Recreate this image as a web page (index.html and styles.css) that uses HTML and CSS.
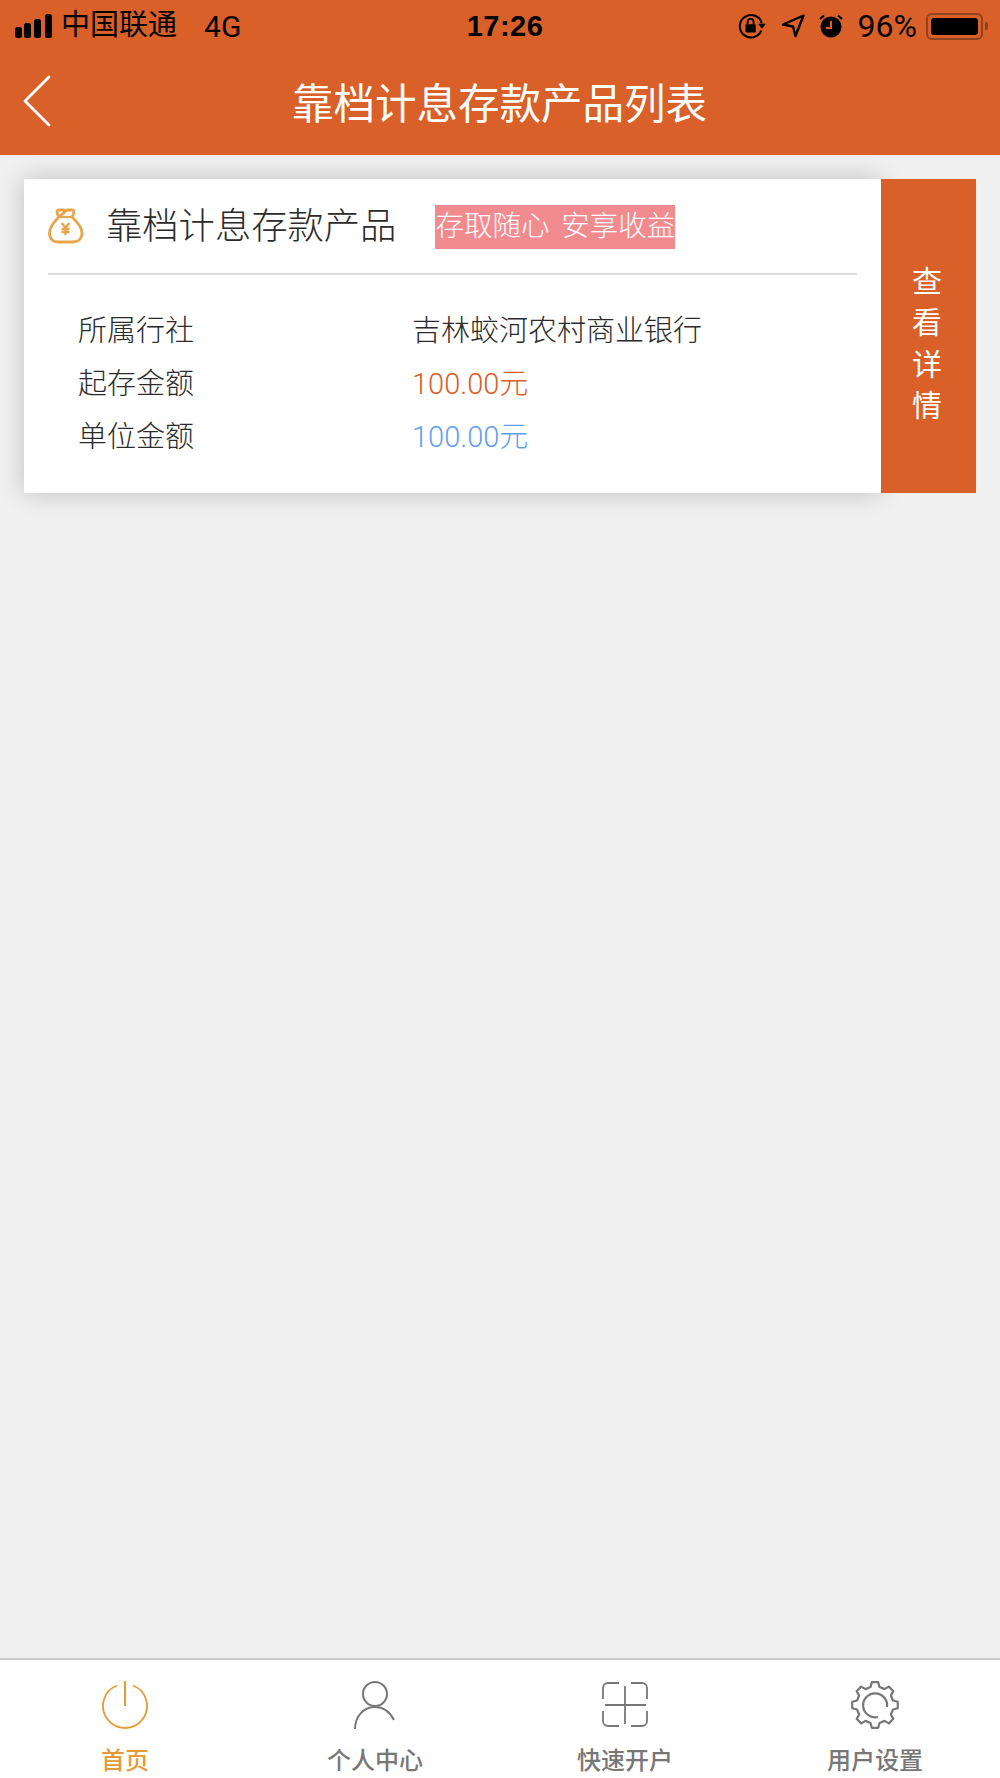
FILE: index.html

```html
<!DOCTYPE html>
<html lang="zh-CN">
<head>
  <meta charset="UTF-8" />
  <meta name="viewport" content="width=device-width, initial-scale=1.0" />
  <title>靠档计息存款产品列表</title>
  <link rel="stylesheet" href="styles.css">
</head>
<body>
  <header class="top">
    <div class="status">
      <div class="status-left">
        <svg class="signal" width="40" height="26" viewBox="0 0 40 26">
          <rect x="1" y="14" width="7" height="11" rx="2.5" />
          <rect x="10" y="10" width="7" height="15" rx="2.5" />
          <rect x="20" y="6" width="7" height="19" rx="2.5" />
          <rect x="31" y="1" width="7" height="24" rx="2.5" />
        </svg>
        <span class="carrier">中国联通</span>
        <span class="network">4G</span>
      </div>
      <div class="time">17:26</div>
      <div class="status-right">
        <svg width="28" height="28" viewBox="0 0 30 28">
          <path d="M25 19 A12 12 0 1 1 25.500 11" fill="none" stroke="#000" stroke-width="2.200" />
          <path d="M21.500 11.500 L30 11.500 L25.700 17 Z" />
          <rect x="8" y="12" width="11" height="9" rx="1" />
          <path d="M10.300 12 V9.500 A3.200 3.200 0 0 1 16.700 9.500 V12" fill="none" stroke="#000" stroke-width="2" />
        </svg>
        <svg class="gap-loc" width="24" height="24" viewBox="0 0 24 24">
          <path d="M22.500 1.500 L2 10.500 L12 12.500 L14.500 22 Z" fill="none" stroke="#000" stroke-width="2.400" stroke-linejoin="round" />
        </svg>
        <svg class="gap-alarm" width="24" height="26" viewBox="0 0 24 26">
          <circle cx="12" cy="14" r="10.500" />
          <path d="M12 8 V15 H7" fill="none" stroke="#d96029" stroke-width="2" />
          <path d="M1 6 L5 2.500 M23 6 L19 2.500" fill="none" stroke="#000" stroke-width="2.200" />
        </svg>
        <span class="battery-num">96%</span>
        <div class="battery"><div class="battery-fill"></div></div>
        <div class="battery-nub"></div>
      </div>
    </div>
    <div class="nav">
      <svg class="back" width="30" height="52" viewBox="0 0 30 52">
        <path d="M27 2 L3 26 L27 50" fill="none" stroke="#fff" stroke-width="2.800" stroke-linecap="round" stroke-linejoin="round" />
      </svg>
      <h1>靠档计息存款产品列表</h1>
    </div>
  </header>

  <main class="content">
    <div class="card">
      <div class="card-body">
        <div class="card-head">
          <svg class="bag" width="36" height="36" viewBox="0 0 36 36">
            <path d="M11 9 C9 6 8 2 11 2 H16 M19 2 H24 C27 2 26 6 24 9 C27 12 34 18 34 25 C34 31 30 34 25 34 H10 C5 34 1.500 31 1.500 25 C1.500 18 8 12 11 9 Z" fill="none" stroke="#e8a64a" stroke-width="2.800" stroke-linejoin="round" stroke-linecap="round" />
            <path d="M11 9 H24" fill="none" stroke="#e8a64a" stroke-width="2.200" />
            <path d="M13.500 15 L17.500 19.500 L21.500 15 M17.500 19.500 V27 M13.500 21 H21.500 M13.500 24 H21.500" fill="none" stroke="#e8a64a" stroke-width="2.400" />
          </svg>
          <span class="card-title">靠档计息存款产品</span>
          <span class="tag">存取随心 安享收益</span>
        </div>
        <div class="rows">
          <div class="row"><span>所属行社</span><span>吉林蛟河农村商业银行</span></div>
          <div class="row"><span>起存金额</span><span class="orange">100.00元</span></div>
          <div class="row"><span>单位金额</span><span class="blue">100.00元</span></div>
        </div>
      </div>
      <div class="card-btn"><span>查</span><span>看</span><span>详</span><span>情</span></div>
    </div>
  </main>

  <footer class="tabs">
    <div class="tab active">
      <svg width="50" height="52" viewBox="0 0 50 52">
        <path d="M17 6.500 A22 22 0 1 0 33 6.500" fill="none" stroke="#e59a38" stroke-width="1.800" />
        <path d="M25 2 V27" fill="none" stroke="#e59a38" stroke-width="2" />
      </svg>
      <span>首页</span>
    </div>
    <div class="tab">
      <svg width="50" height="52" viewBox="0 0 50 52">
        <circle cx="25" cy="15" r="12" fill="none" stroke="#777" stroke-width="2" />
        <path d="M5 50 C5 37 14 28 25 28 C33 28 40 33 44 41" fill="none" stroke="#777" stroke-width="2" />
      </svg>
      <span>个人中心</span>
    </div>
    <div class="tab">
      <svg width="50" height="52" viewBox="0 0 50 52">
        <path d="M19 4 H8 A5 5 0 0 0 3 9 V20 M3 32 V42 A5 5 0 0 0 8 47 H19 M31 4 H42 A5 5 0 0 1 47 9 V20 M47 32 V42 A5 5 0 0 1 42 47 H31" fill="none" stroke="#777" stroke-width="1.800" />
        <path d="M5 26 H46 M25 7 V45" fill="none" stroke="#777" stroke-width="1.800" />
      </svg>
      <span>快速开户</span>
    </div>
    <div class="tab">
      <svg width="50" height="52" viewBox="-25 -26 50 52">
        <path d="M-4.480 -17.950 L-3.200 -22.780 L3.200 -22.780 L4.480 -17.950 L9.530 -15.860 L13.840 -18.370 L18.370 -13.840 L15.860 -9.530 L17.950 -4.480 L22.780 -3.200 L22.780 3.200 L17.950 4.480 L15.860 9.530 L18.370 13.840 L13.840 18.370 L9.530 15.860 L4.480 17.950 L3.200 22.780 L-3.200 22.780 L-4.480 17.950 L-9.530 15.860 L-13.840 18.370 L-18.370 13.840 L-15.860 9.530 L-17.950 4.480 L-22.780 3.200 L-22.780 -3.200 L-17.950 -4.480 L-15.860 -9.530 L-18.370 -13.840 L-13.840 -18.370 L-9.530 -15.860 Z" fill="none" stroke="#777" stroke-width="2.200" stroke-linejoin="round" />
        <path d="M3 12 A12 12 0 1 1 12 2" fill="none" stroke="#777" stroke-width="2.200" />
      </svg>
      <span>用户设置</span>
    </div>
  </footer>
</body>
</html>
```

FILE: styles.css

```css
* { box-sizing: border-box; }
html, body { margin: 0; padding: 0; }
body {
  width: 1000px;
  height: 1778px;
  display: flex;
  flex-direction: column;
  overflow: hidden;
  background: #f0f0f0;
  color: #2b2b2b;
  font-family: Roboto, "Noto Sans CJK SC", sans-serif;
  font-weight: 300;
}

/* status bar + nav */
.top { height: 155px; background: #d96029; flex: none; }
.status { height: 52px; display: grid; grid-template-columns: 1fr auto 1fr; align-items: center; color: #000; }
.status-left { display: flex; align-items: center; padding-left: 14px; font-size: 29px; font-weight: 400; }
.signal { flex: none; margin-right: 7px; }
.carrier { line-height: 46px; margin-bottom: 2px; }
.network { margin-left: 27px; font-size: 30px; }
.time { margin-left: 10px; font-family: "Liberation Sans", sans-serif; font-size: 29px; font-weight: 700; letter-spacing: 0.500px; }
.status-right { display: flex; align-items: center; justify-content: flex-end; padding-right: 12px; }
.gap-loc { margin-left: 15px; }
.gap-alarm { margin-left: 14px; }
.battery-num { margin-left: 15px; font-size: 32px; font-weight: 400; }
.battery { width: 57px; height: 27px; margin-left: 9px; padding: 3px; border: 2px solid #8f431c; border-radius: 6px; }
.battery-fill { height: 100%; background: #000; border-radius: 3px; }
.battery-nub { width: 3px; height: 8px; margin-left: 2px; background: #8f431c; border-radius: 0 2px 2px 0; }

.nav { height: 103px; display: flex; align-items: center; justify-content: center; position: relative; }
.nav h1 { margin: 0 0 6px; padding-right: 1px; color: #fff; font-size: 41.500px; font-weight: 400; }
.back { position: absolute; left: 22px; top: 23px; }

/* card */
.content { flex: 1; padding: 24px 24px 0 24px; }
.card { display: flex; height: 314px; }
.card-body { flex: 1; background: #fff; padding: 0 24px; box-shadow: 0 0 24px rgba(0, 0, 0, 0.2); }
.card-btn {
  width: 95px;
  display: flex;
  flex-direction: column;
  align-items: center;
  justify-content: center;
  padding: 15px 3px 0 0;
  background: #d96029;
  color: #fff;
  font-size: 30px;
  font-weight: 400;
  line-height: 41.500px;
  position: relative;
}
.card-head { height: 96px; display: flex; align-items: center; border-bottom: 2px solid #ddd; padding-bottom: 4px; }
.bag { flex: none; margin-top: 4px; margin-left: 0; }
.card-title { margin-left: 22px; margin-top: -3px; font-size: 36.300px; }
.tag {
  margin-left: 39px;
  height: 44px;
  line-height: 44px;
  margin-top: 5px;
  background: #f28b8f;
  color: #fff;
  font-size: 28.500px;
  word-spacing: 5px;
  white-space: nowrap;
}
.rows { padding: 30px 0 0 30px; }
.row { display: grid; grid-template-columns: 334px 1fr; height: 53px; line-height: 53px; font-size: 29px; }
.orange { color: #d96029; }
.blue { color: #5f9fee; }

/* bottom tabs */
.tabs {
  height: 120px;
  flex: none;
  display: grid;
  grid-template-columns: repeat(4, 1fr);
  background: #fff;
  border-top: 2px solid #ccc;
}
.tab { display: flex; flex-direction: column; align-items: center; padding-top: 19px; color: #777; font-size: 24px; font-weight: 500; line-height: 32px; }
.tab span { margin-top: 14px; }
.tab.active { color: #e59a38; }
```
